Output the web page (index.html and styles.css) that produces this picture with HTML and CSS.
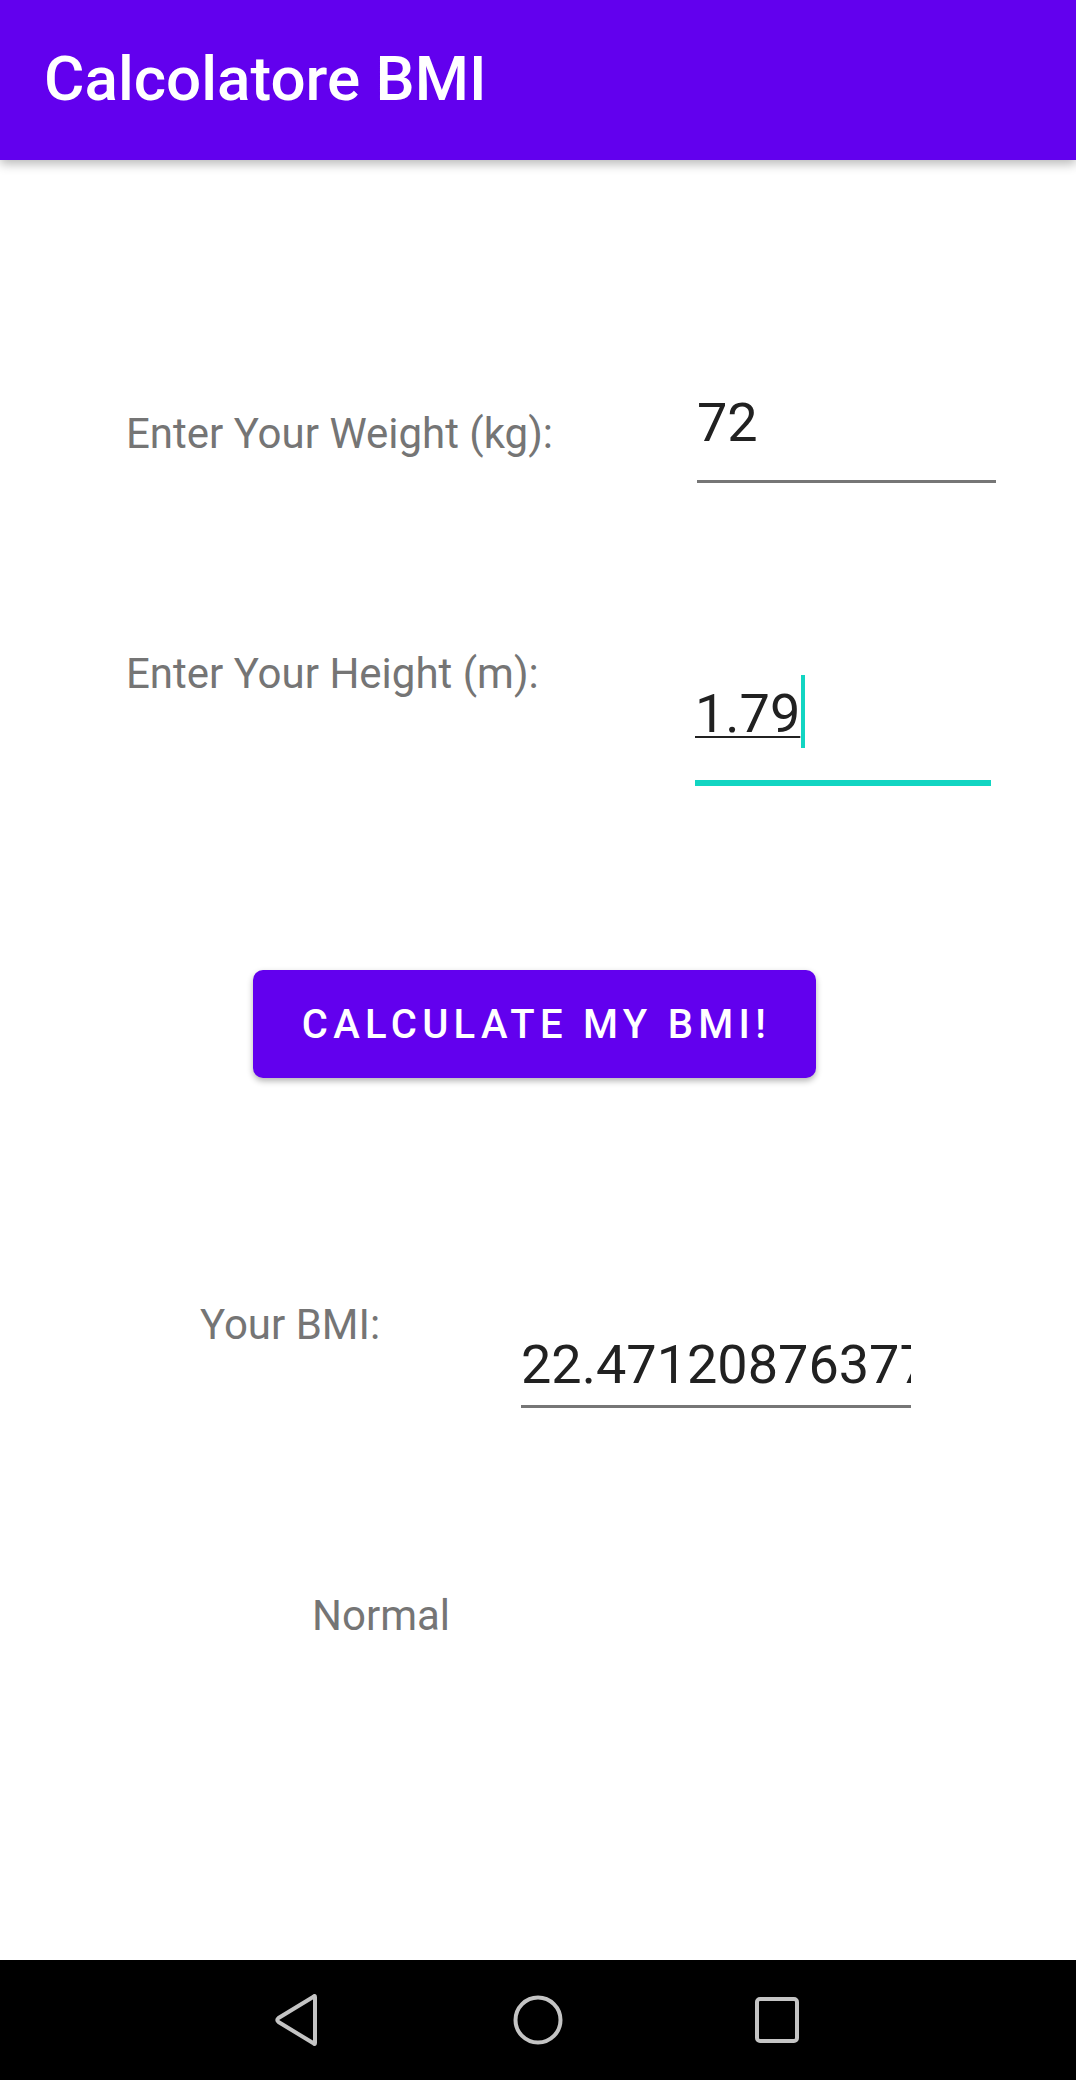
FILE: index.html
```html
<!DOCTYPE html>
<html lang="it">
<head>
<meta charset="utf-8">
<title>Calcolatore BMI</title>
<link rel="stylesheet" href="styles.css">
</head>
<body>
<div class="app">
  <header class="appbar">
    <h1 class="title">Calcolatore BMI</h1>
  </header>
  <main class="content">
    <div class="row row-weight">
      <span class="label label-weight">Enter Your Weight (kg):</span>
      <div class="field field-weight"><span class="value">72</span></div>
    </div>
    <div class="row row-height">
      <span class="label label-height">Enter Your Height (m):</span>
      <div class="field field-height focused"><span class="value composing">1.79</span><span class="cursor"></span></div>
    </div>
    <div class="btn-wrap">
      <button class="btn">CALCULATE MY BMI!</button>
    </div>
    <div class="row row-bmi">
      <span class="label label-bmi">Your BMI:</span>
      <div class="field field-bmi"><span class="value">22.471208763771418</span></div>
    </div>
    <div class="row row-status">
      <span class="label">Normal</span>
    </div>
  </main>
  <nav class="navbar">
    <svg class="nav-icon" width="50" height="52" viewBox="0 0 50 52">
      <path d="M42 3 L42 49 Q42 51 40.5 49.3 L5.5 28 Q3 26 5.5 24 L40.5 2.7 Q42 1 42 3 Z" fill="none" stroke="#c4c4c4" stroke-width="4" stroke-linejoin="round"/>
    </svg>
    <svg class="nav-icon" width="52" height="52" viewBox="0 0 52 52">
      <circle cx="26" cy="26" r="22.5" fill="none" stroke="#c4c4c4" stroke-width="4"/>
    </svg>
    <svg class="nav-icon" width="48" height="50" viewBox="0 0 48 50">
      <rect x="4" y="4" width="40" height="42" rx="3" fill="none" stroke="#c4c4c4" stroke-width="4"/>
    </svg>
  </nav>
</div>
</body>
</html>
```

FILE: styles.css
```css
html, body {
  margin: 0;
  padding: 0;
  background: #ffffff;
}

body {
  width: 1076px;
  height: 2080px;
  overflow: hidden;
  font-family: Roboto, "Liberation Sans", sans-serif;
}

.app {
  display: flex;
  flex-direction: column;
  height: 2080px;
}

.appbar {
  height: 160px;
  flex: none;
  background: #6200ee;
  display: flex;
  align-items: center;
  padding: 0 0 3px 44px;
  box-sizing: border-box;
  box-shadow: 0 4px 10px rgba(0, 0, 0, 0.28);
  position: relative;
  z-index: 1;
}

.title {
  margin: 0;
  font-size: 62px;
  line-height: 1;
  font-weight: 500;
  color: #ffffff;
}

.content {
  flex: 1;
  display: flex;
  flex-direction: column;
}

.row {
  display: flex;
  align-items: flex-start;
}

.label {
  flex: none;
  font-size: 42px;
  line-height: 41px;
  color: #757575;
}

.field {
  flex: none;
  display: flex;
  align-items: flex-start;
  white-space: nowrap;
}

.value {
  font-size: 54px;
  line-height: 54px;
  color: #212121;
}

/* weight */
.row-weight {
  margin-top: 236px;
  padding-left: 126px;
}
.label-weight {
  width: 571px;
  margin-top: 17px;
}
.field-weight {
  width: 299px;
  padding-bottom: 30px;
  border-bottom: 3px solid #767676;
}

/* height */
.row-height {
  margin-top: 170px;
  padding-left: 126px;
}
.label-height {
  width: 569px;
}
.field-height {
  width: 296px;
  margin-top: 34px;
  padding-bottom: 32px;
  border-bottom: 6px solid #12d5c2;
}
.composing {
  text-decoration: underline;
  text-decoration-thickness: 2px;
  text-underline-offset: 4px;
}
.cursor {
  flex: none;
  width: 4px;
  height: 73px;
  margin-top: -12px;
  margin-left: 1px;
  background: #12d5c2;
}

/* button */
.btn-wrap {
  display: flex;
  justify-content: center;
  margin-top: 184px;
  padding-right: 8px;
}
.btn {
  width: 563px;
  height: 108px;
  border: none;
  border-radius: 10px;
  background: #6200ee;
  color: #ffffff;
  font-family: Roboto, "Liberation Sans", sans-serif;
  font-size: 40px;
  font-weight: 500;
  letter-spacing: 5.3px;
  padding: 0 0 0 5px;
  box-shadow: 0 3px 6px rgba(0, 0, 0, 0.3);
}

/* bmi */
.row-bmi {
  margin-top: 226px;
  padding-left: 200px;
}
.label-bmi {
  width: 321px;
}
.field-bmi {
  width: 390px;
  margin-top: 34px;
  padding-bottom: 13px;
  border-bottom: 3px solid #767676;
  overflow: hidden;
}

/* status */
.row-status {
  margin-top: 187px;
  padding-left: 312px;
}

/* nav bar */
.navbar {
  height: 120px;
  flex: none;
  background: #000000;
  display: flex;
  align-items: center;
  justify-content: center;
  gap: 189px;
  padding-right: 2px;
}
.nav-icon {
  display: block;
  flex: none;
}
```
